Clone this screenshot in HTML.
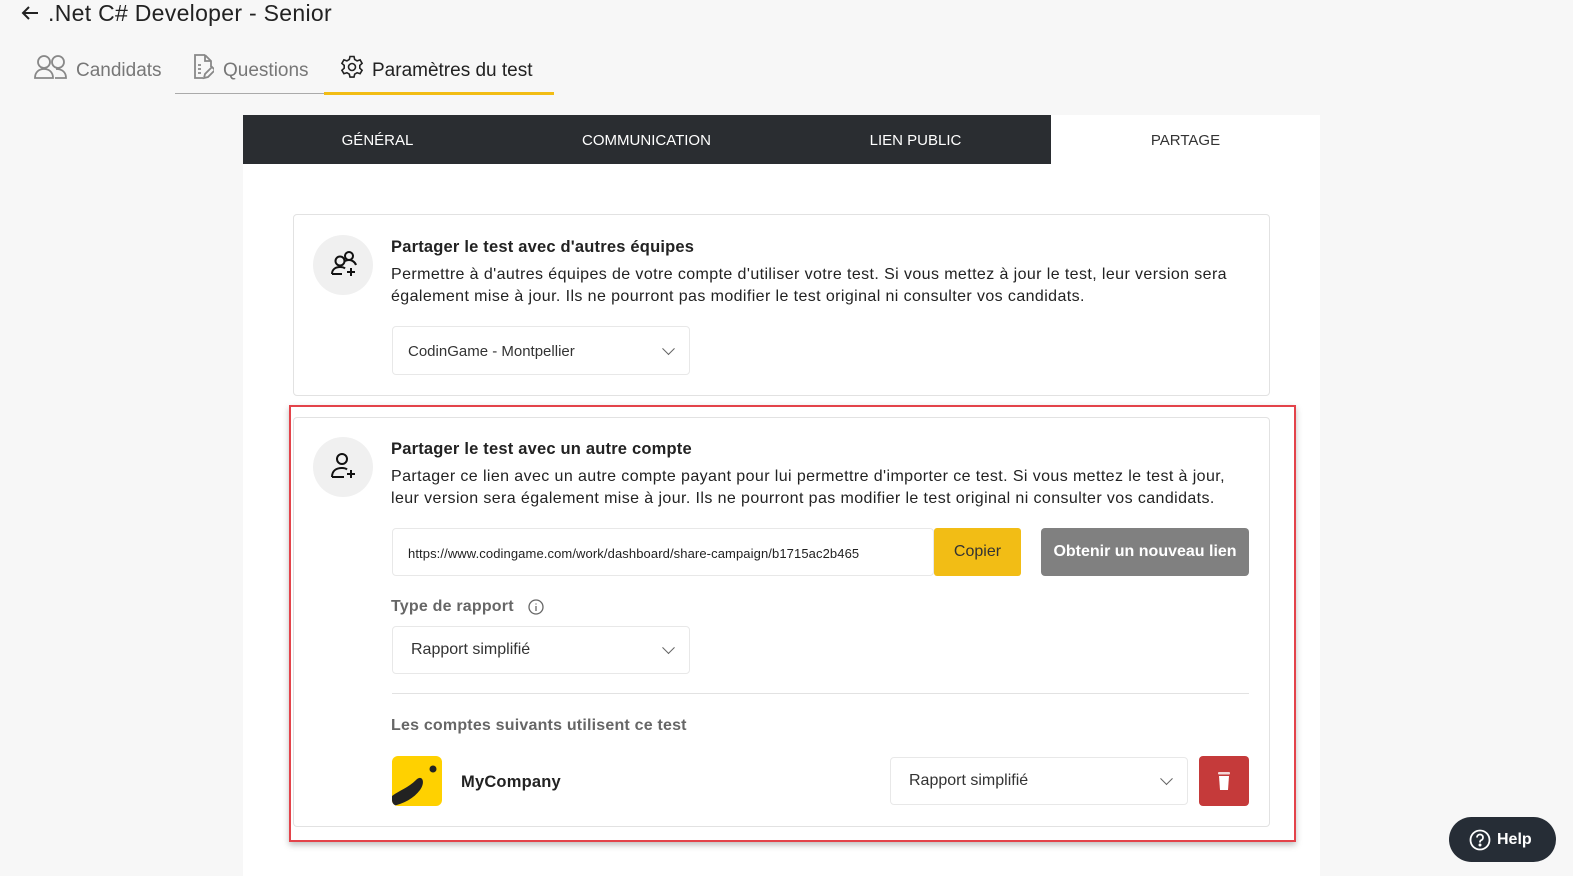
<!DOCTYPE html>
<html><head><meta charset="utf-8"><style>
*{box-sizing:border-box;margin:0;padding:0}
body{width:1573px;height:876px;background:#f7f7f7;font-family:"Liberation Sans",sans-serif;color:#222;position:relative;overflow:hidden}
.a{position:absolute}
.title{left:48px;top:0px;font-size:23px;color:#222;white-space:nowrap;letter-spacing:.3px}
.tab{top:60px;font-size:19px;color:#777;white-space:nowrap}
.panel{left:243px;top:115px;width:1077px;height:761px;background:#fff}
.bar{left:243px;top:115px;width:808px;height:49px;background:#2a2d31}
.bt{top:132px;font-size:15px;color:#fff;width:269px;text-align:center}
.card{left:293px;width:977px;border:1px solid #e2e2e2;border-radius:4px;background:#fff}
.circ{width:60px;height:60px;border-radius:50%;background:#f0f0f0}
.h{font-weight:bold;font-size:16.5px;color:#222;white-space:nowrap;letter-spacing:.2px}
.p{font-size:16px;line-height:22px;color:#222;white-space:nowrap;letter-spacing:.4px}
.sel{border:1px solid #e8e8e8;border-radius:4px;background:#fff;font-size:16px;color:#333}
.chev{position:absolute;right:16px;top:50%;width:9px;height:9px;border-right:1.5px solid #666;border-bottom:1.5px solid #666;transform:translateY(-75%) rotate(45deg)}
</style></head><body>
<svg class="a" style="left:20px;top:5px" width="20" height="16" viewBox="0 0 20 16"><path d="M18 8H3M9 2L3 8l6 6" stroke="#222" stroke-width="2" fill="none"/></svg>
<div class="a title">.Net C# Developer - Senior</div>
<svg class="a" style="left:34px;top:54px" width="34" height="26" viewBox="0 0 34 26" fill="none" stroke="#888" stroke-width="1.8"><circle cx="10" cy="8" r="6"/><path d="M1 24c0-6 4-9 9-9s9 3 9 9z"/><circle cx="24" cy="8" r="6"/><path d="M22 15c6 0 10 3 10 9H21"/></svg>
<div class="a tab" style="left:76px">Candidats</div>
<svg class="a" style="left:192px;top:54px" width="22" height="26" viewBox="0 0 22 26" fill="none" stroke="#888" stroke-width="1.8"><path d="M13 1H3v23h8M13 1l6 6v6M13 1v6h6"/><path d="M6 11h3M6 15h3M6 19h3"/><path d="M12 24l1-4 7-7 3 3-7 7z"/></svg>
<div class="a tab" style="left:223px">Questions</div>
<svg class="a" style="left:340px;top:55px" width="24" height="24" viewBox="0 0 24 24" fill="none" stroke="#222" stroke-width="1.6"><circle cx="12" cy="12" r="3.5"/><path d="M10 1.5h4l.7 3 2.4 1.4 3-1 2 3.4-2.3 2.1v2.8l2.3 2.1-2 3.4-3-1-2.4 1.4-.7 3h-4l-.7-3-2.4-1.4-3 1-2-3.4 2.3-2.1v-2.8L1.9 8.3l2-3.4 3 1 2.4-1.4z"/></svg>
<div class="a tab" style="left:372px;color:#222">Paramètres du test</div>
<div class="a" style="left:175px;top:93px;width:149px;height:1px;background:#aaa"></div>
<div class="a" style="left:324px;top:92px;width:230px;height:3px;background:#f2bd15"></div>

<div class="a panel"></div>
<div class="a bar"></div>
<div class="a bt" style="left:243px">GÉNÉRAL</div>
<div class="a bt" style="left:512px">COMMUNICATION</div>
<div class="a bt" style="left:781px">LIEN PUBLIC</div>
<div class="a bt" style="left:1051px;color:#333">PARTAGE</div>

<div class="a card" style="top:214px;height:182px"></div>
<div class="a circ" style="left:313px;top:235px"></div>
<svg class="a" style="left:329px;top:250px" width="30" height="30" viewBox="0 0 30 30" fill="none" stroke="#111" stroke-width="2"><circle cx="11" cy="11" r="4.5"/><path d="M3 24c0-5 4-7 8-7 2 0 4 .5 5 1.5M3 24h10"/><circle cx="20" cy="6" r="4"/><path d="M16 11c1-.6 3-1 4-1 3 0 6 2 7 5"/><path d="M22 18v8M18 22h8"/></svg>
<div class="a h" style="left:391px;top:238px">Partager le test avec d'autres équipes</div>
<div class="a p" style="left:391px;top:264px">Permettre à d'autres équipes de votre compte d'utiliser votre test. Si vous mettez à jour le test, leur version sera<br>également mise à jour. Ils ne pourront pas modifier le test original ni consulter vos candidats.</div>
<div class="a sel" style="left:392px;top:326px;width:298px;height:49px;padding:16px 0 0 15px;font-size:15px">CodinGame - Montpellier<span class="chev"></span></div>

<div class="a" style="left:289px;top:405px;width:1007px;height:437px;border:2px solid #e3434a;box-shadow:0 3px 6px rgba(0,0,0,.25)"></div>
<div class="a card" style="top:417px;height:410px"></div>
<div class="a circ" style="left:313px;top:437px"></div>
<svg class="a" style="left:329px;top:451px" width="30" height="30" viewBox="0 0 30 30" fill="none" stroke="#111" stroke-width="2"><circle cx="13" cy="8" r="5"/><path d="M3 26c0-6 4-9 10-9 2 0 4 .5 5 1.5M3 26h12"/><path d="M22 19v8M18 23h8"/></svg>
<div class="a h" style="left:391px;top:440px">Partager le test avec un autre compte</div>
<div class="a p" style="left:391px;top:466px">Partager ce lien avec un autre compte payant pour lui permettre d'importer ce test. Si vous mettez le test à jour,<br>leur version sera également mise à jour. Ils ne pourront pas modifier le test original ni consulter vos candidats.</div>
<div class="a sel" style="left:392px;top:528px;width:542px;height:48px;padding:17px 0 0 15px;font-size:13px;color:#222;letter-spacing:.1px">https://www.codingame.com/work/dashboard/share-campaign/b1715ac2b465</div>
<div class="a" style="left:934px;top:528px;width:87px;height:48px;background:#f2bd15;border-radius:3px;font-size:16px;color:#333;text-align:center;line-height:48px">Copier</div>
<div class="a" style="left:1041px;top:528px;width:208px;height:48px;background:#808080;border-radius:4px;font-size:16px;font-weight:bold;color:#fff;text-align:center;line-height:48px">Obtenir un nouveau lien</div>
<div class="a h" style="left:391px;top:598px;color:#666;font-size:16px">Type de rapport</div>
<svg class="a" style="left:528px;top:599px" width="16" height="16" viewBox="0 0 16 16" fill="none" stroke="#666" stroke-width="1.3"><circle cx="8" cy="8" r="7"/><path d="M8 7v5M8 4.5v1"/></svg>
<div class="a sel" style="left:392px;top:626px;width:298px;height:48px;padding:14px 0 0 18px">Rapport simplifié<span class="chev"></span></div>
<div class="a" style="left:392px;top:693px;width:857px;height:1px;background:#e2e2e2"></div>
<div class="a h" style="left:391px;top:717px;color:#666;font-size:16px">Les comptes suivants utilisent ce test</div>
<div class="a" style="left:392px;top:756px;width:50px;height:50px;background:#ffd100;border-radius:6px;overflow:hidden"><svg width="50" height="50" viewBox="0 0 50 50"><circle cx="41" cy="13" r="3.5" fill="#222"/><path d="M0 40c8-6 16-8 24-16 6-6 10 2 4 10-6 8-16 14-28 16z" fill="#222"/></svg></div>
<div class="a h" style="left:461px;top:773px">MyCompany</div>
<div class="a sel" style="left:890px;top:757px;width:298px;height:48px;padding:14px 0 0 18px">Rapport simplifié<span class="chev"></span></div>
<div class="a" style="left:1199px;top:756px;width:50px;height:50px;background:#c53a3a;border-radius:4px"><svg style="position:absolute;left:17px;top:16px" width="16" height="18" viewBox="0 0 16 18"><rect x="2" y="0" width="12" height="2.5" rx="1" fill="#fff" opacity=".8"/><path d="M3 4h10l-1 14H4z" fill="#fff"/></svg></div>

<div class="a" style="left:1449px;top:817px;width:107px;height:45px;background:#262d36;border-radius:23px;color:#fff;font-weight:bold;font-size:16px;line-height:45px;padding-left:48px">Help</div>
<svg class="a" style="left:1469px;top:829px" width="22" height="22" viewBox="0 0 22 22" fill="none" stroke="#fff" stroke-width="1.8"><circle cx="11" cy="11" r="9.5"/><path d="M8 8.5a3 3 0 1 1 4 2.8c-1 .4-1 1-1 2.2"/><circle cx="11" cy="16" r=".6" fill="#fff"/></svg>
</body></html>
